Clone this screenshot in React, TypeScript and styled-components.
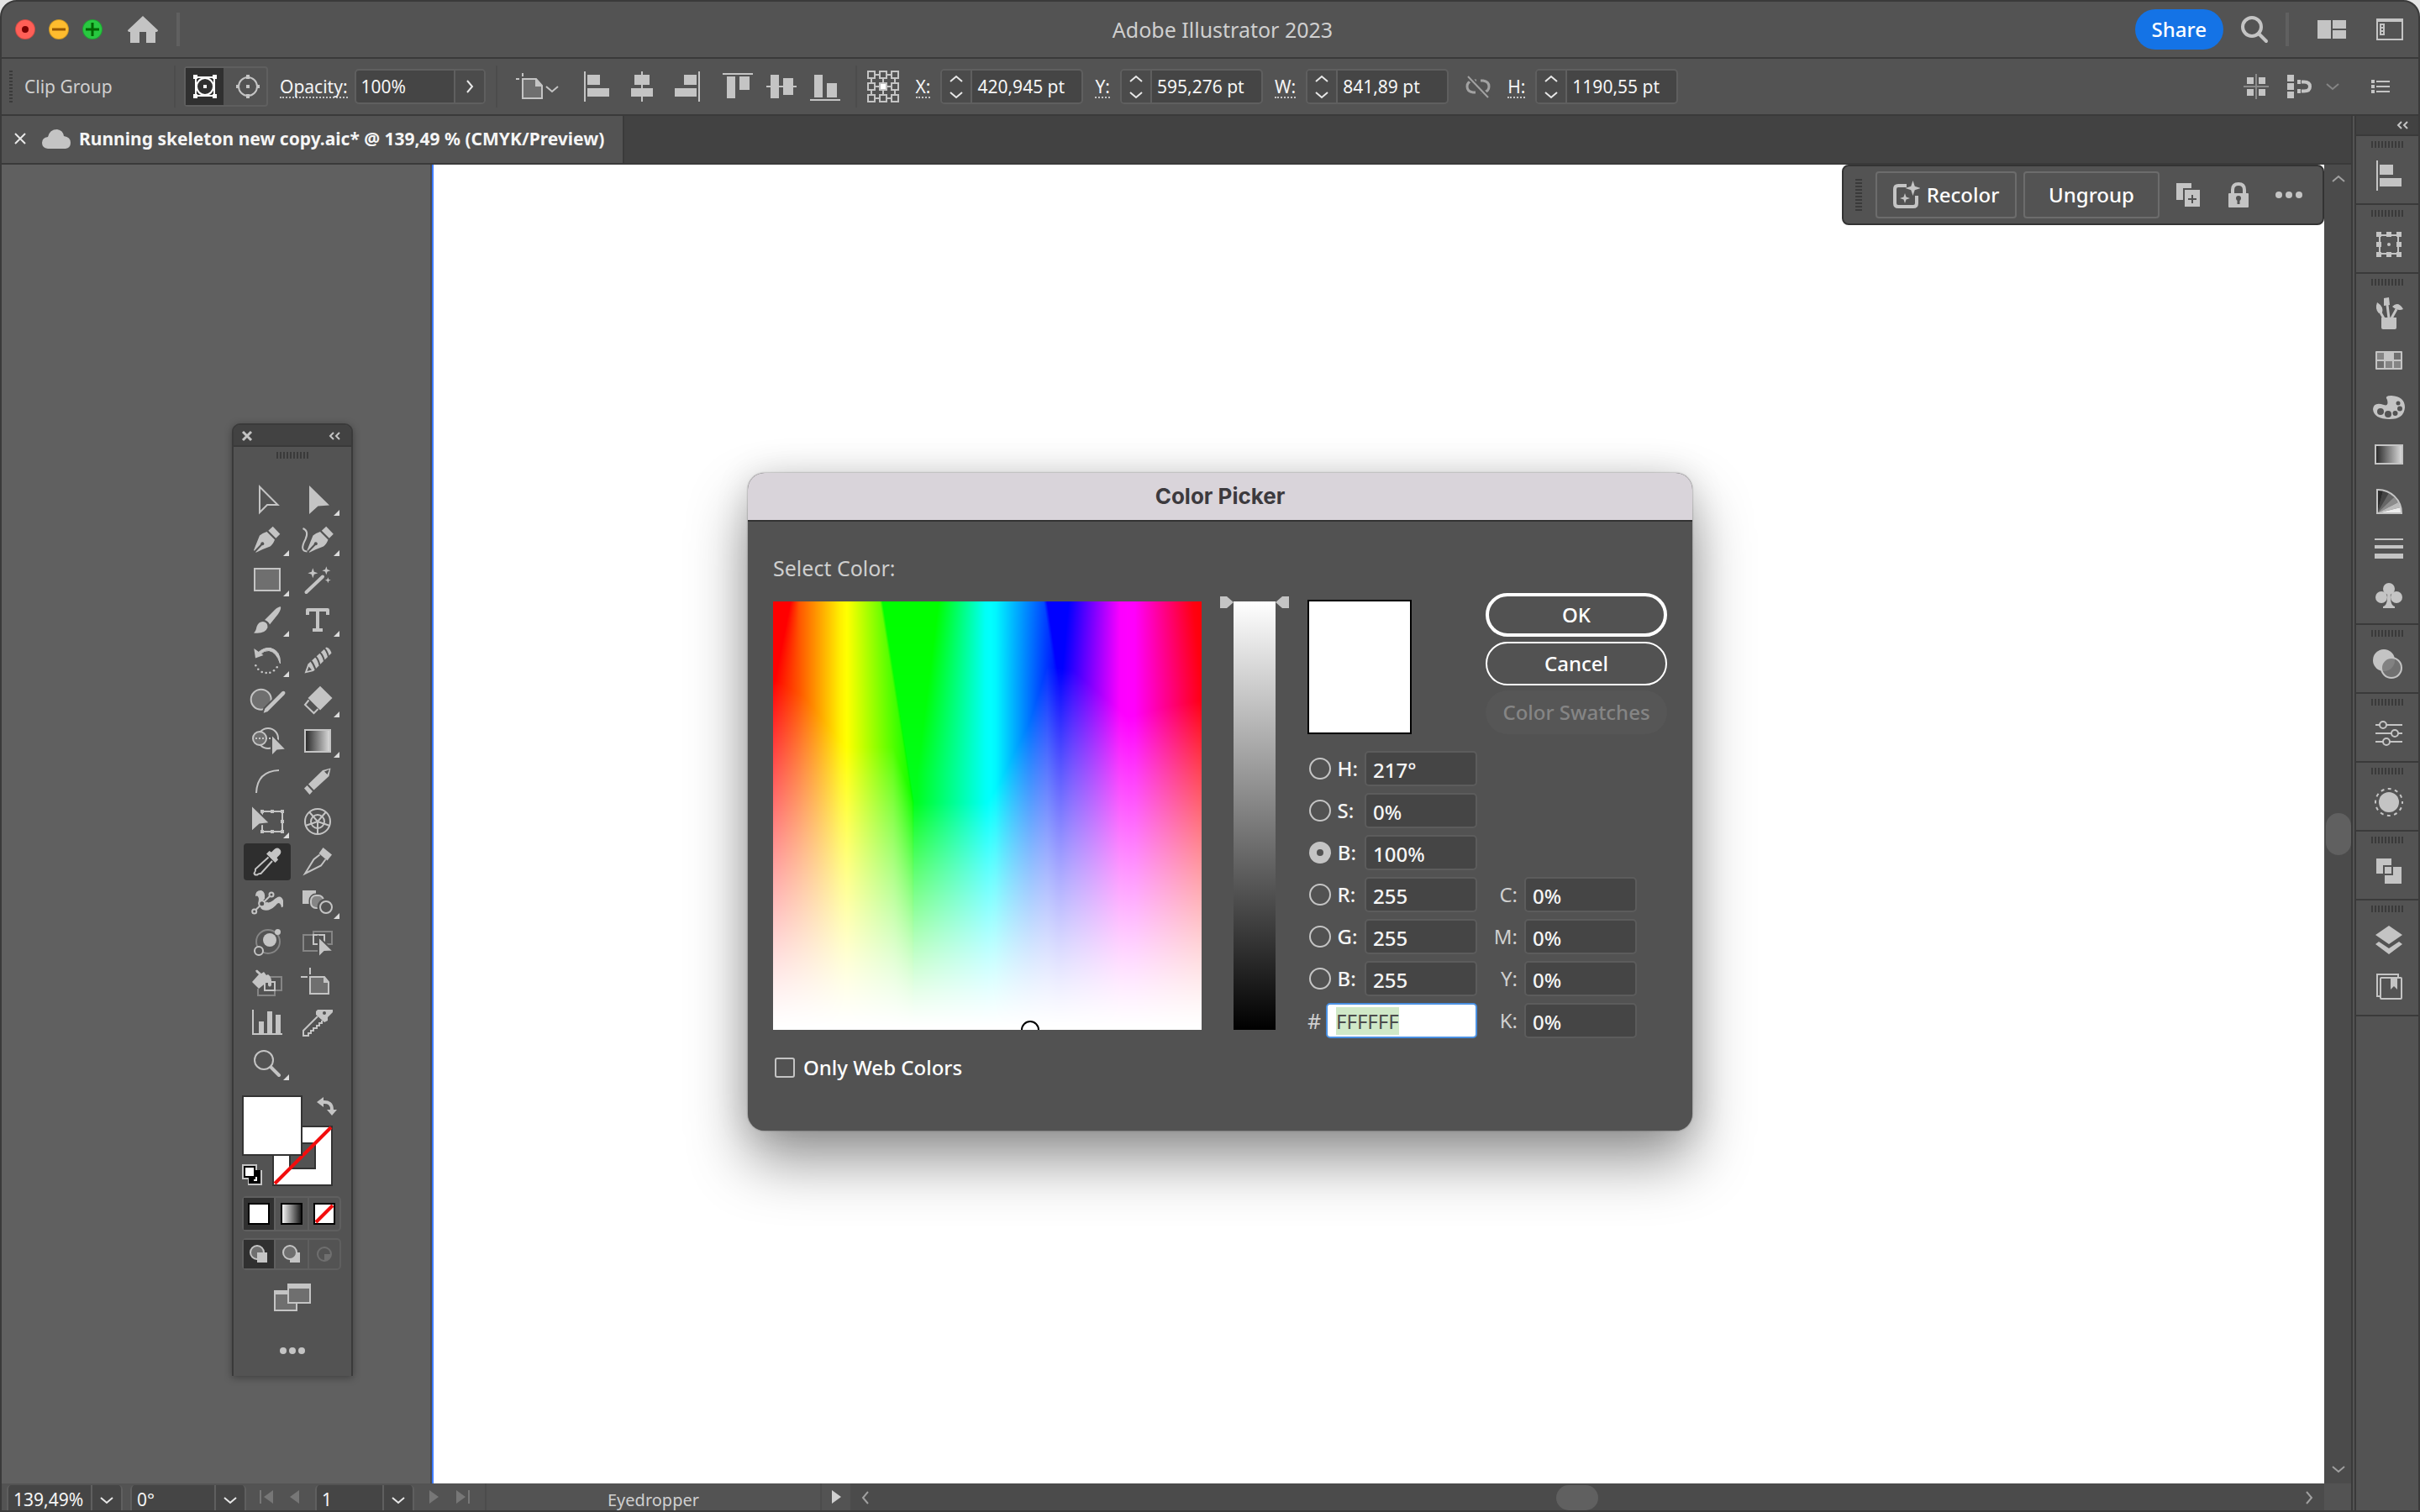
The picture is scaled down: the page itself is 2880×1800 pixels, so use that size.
import React, { useEffect, useRef } from 'react';
import styled, { createGlobalStyle, css } from 'styled-components';

const c = {
  panel: '#535353',
  line: '#3a3a3a',
  strip: '#424242',
  field: '#454545',
  edge: '#5f5f5f',
  pressed: '#303030',
  icon: '#c4c4c4',
  mid: '#6f6f6f',
  text: '#cfcfcf',
  bright: '#f5f5f5',
};

const Global = createGlobalStyle`
  *, *::before, *::after { box-sizing: border-box; }
  html, body { margin: 0; height: 100%; background: #e4e4e4; }
  #root { height: 100%; }
  body, button, input, select {
    font-family: "Noto Sans", "Open Sans", sans-serif;
  }
  button, input, select { margin: 0; padding: 0; color: inherit; }
  svg { display: block; flex: none; }
`;

/* ---------- window frame ---------- */

const Frame = styled.div`
  display: flex;
  flex-direction: column;
  min-height: 100vh;
  border: 2px solid ${c.line};
  border-radius: 20px 20px 0 0;
  overflow: hidden;
  background: ${c.panel};
  color: ${c.text};
  font-size: 21px;
  line-height: 28px;
`;

const Defs = styled.svg`
  position: absolute;
`;

const TitleBar = styled.header`
  display: grid;
  grid-template-columns: 1fr auto 1fr;
  align-items: center;
  height: 68px;
  padding: 0 18px 0 16px;
  border-bottom: 2px solid ${c.line};
`;

const AppTitle = styled.h1`
  margin: 0;
  padding-left: 32px;
  font-size: 25px;
  line-height: 34px;
  font-weight: 400;
`;

const Cluster = styled.div<{ $gap?: number; $ml?: number; $end?: boolean }>`
  display: flex;
  align-items: center;
  gap: ${p => p.$gap ?? 16}px;
  margin-left: ${p => p.$ml ?? 0}px;
  ${p => p.$end && 'justify-content: flex-end;'}
`;

const Light = styled.button<{ $tone: string }>`
  display: grid;
  place-items: center;
  width: 24px;
  height: 24px;
  border: 1px solid rgba(0, 0, 0, 0.2);
  border-radius: 50%;
  background: ${p => p.$tone};
`;

const Plain = styled.button<{ $ml?: number }>`
  display: flex;
  align-items: center;
  justify-content: center;
  border: 0;
  background: none;
  margin-left: ${p => p.$ml ?? 0}px;
`;

const Rule = styled.span<{ $h: number; $w?: number; $ml?: number; $dark?: boolean }>`
  width: ${p => p.$w ?? 4}px;
  height: ${p => p.$h}px;
  margin-left: ${p => p.$ml ?? 0}px;
  background: ${p => (p.$dark ? '#4c4c4c' : '#606060')};
`;

const Share = styled.button`
  height: 48px;
  padding: 0 20px;
  border: 0;
  border-radius: 24px;
  background: #1473e6;
  color: #fff;
  font-size: 24px;
  line-height: 34px;
  font-weight: 500;
`;

/* ---------- control bar ---------- */

const ControlBar = styled.section`
  display: flex;
  align-items: center;
  height: 68px;
  padding: 0 34px 0 9px;
  border-bottom: 2px solid ${c.line};
`;

const Grip = styled.span<{ $vertical?: boolean; $w: number; $h: number }>`
  flex: none;
  width: ${p => p.$w}px;
  height: ${p => p.$h}px;
  background: repeating-linear-gradient(
    ${p => (p.$vertical ? '180deg' : '90deg')},
    ${c.line} 0 2px,
    transparent 2px 4px
  );
`;

const Kind = styled.span`
  width: 178px;
  margin-left: 14px;
`;

const Toggle = styled.div`
  display: flex;
  gap: 6px;
  margin-left: 10px;
  border: 2px solid ${c.edge};
  border-radius: 4px;
`;

const ToggleButton = styled.button<{ $on?: boolean }>`
  display: grid;
  place-items: center;
  width: 45px;
  height: 44px;
  border: 0;
  background: ${p => (p.$on ? c.pressed : 'none')};
`;

const Caption = styled.label<{ $ml: number }>`
  margin-left: ${p => p.$ml}px;
  height: 28px;
  border-bottom: 2px dotted ${c.icon};
  color: ${c.bright};
`;

const Field = styled.div<{ $w: number; $ml: number }>`
  display: flex;
  width: ${p => p.$w}px;
  height: 42px;
  margin-left: ${p => p.$ml}px;
  border: 2px solid ${c.edge};
  border-radius: 5px;
  background: ${c.field};
  overflow: hidden;
  flex: none;
`;

const FieldInput = styled.input`
  flex: 1;
  min-width: 0;
  border: 0;
  padding: 0 6px;
  background: none;
  color: ${c.bright};
  font-size: 21px;
`;

const Stepper = styled.div`
  display: flex;
  flex-direction: column;
  width: 36px;
  border-right: 2px solid ${c.edge};
  background: #4b4b4b;
`;

const Step = styled.button`
  display: grid;
  place-items: center;
  flex: 1;
  border: 0;
  background: none;
`;

const FlyButton = styled.button`
  display: grid;
  place-items: center;
  width: 36px;
  border: 0;
  border-left: 2px solid ${c.edge};
  background: #4b4b4b;
`;

const Spacer = styled.span`
  flex: 1;
`;

/* ---------- work area ---------- */

const Work = styled.div`
  display: flex;
  flex: 1;
  min-height: 0;
`;

const Doc = styled.main`
  display: flex;
  flex-direction: column;
  flex: 1;
  min-width: 0;
  border-right: 2px solid ${c.line};
`;

const TabStrip = styled.nav`
  display: flex;
  height: 58px;
  background: ${c.strip};
  border-bottom: 2px solid ${c.line};
`;

const Tab = styled.div`
  display: flex;
  align-items: center;
  gap: 10px;
  padding: 0 22px 2px 14px;
  border-right: 2px solid ${c.line};
  background: ${c.panel};
  color: ${c.bright};
  font-weight: 700;
  white-space: nowrap;
`;

const Stage = styled.div`
  position: relative;
  display: flex;
  flex: 1;
  min-height: 0;
`;

const Pasteboard = styled.div`
  width: 512px;
  border-right: 2px solid #4a4a4e;
  background: #606060;
`;

const Artboard = styled.div`
  flex: 1;
  border-left: 2px solid #3d7bff;
  background: #fff;
`;

const ScrollV = styled.div`
  display: flex;
  flex-direction: column;
  align-items: center;
  width: 32px;
  padding: 12px 0 12px 2px;
  background: #4b4b4b;
`;

const Thumb = styled.span`
  border-radius: 15px;
  background: #606060;
  flex: none;
`;

const ThumbV = styled(Thumb)`
  width: 30px;
  height: 50px;
`;

const ThumbH = styled(Thumb)`
  width: 50px;
  height: 30px;
`;

const Flex = styled.span<{ $n: number }>`
  flex: ${p => p.$n} 1 0;
`;

const StatusBar = styled.footer`
  display: flex;
  align-items: stretch;
  height: 32px;
`;

const StatusLeft = styled.div`
  display: flex;
  align-items: center;
  width: 1010px;
  padding-left: 6px;
`;

const StatusSelect = styled.label<{ $w: number; $mr?: number }>`
  display: flex;
  align-items: center;
  width: ${p => p.$w}px;
  height: 30px;
  margin: 2px ${p => p.$mr ?? 0}px 0 0;
  border: solid ${c.edge};
  border-width: 0 2px;
  border-radius: 5px 5px 0 0;
  background: ${c.field};
  color: ${c.bright};
  select {
    appearance: none;
    flex: 1;
    min-width: 0;
    height: 30px;
    padding: 4px 0 0 6px;
    border: 0;
    border-right: 2px solid ${c.edge};
    background: none;
    font-size: 21px;
    line-height: 26px;
  }
  svg { margin: 6px 9px 0; }
`;

const StatusText = styled.span`
  flex: 1;
  height: 32px;
  padding-top: 5px;
  border-left: 2px solid #4c4c4c;
  border-right: 2px solid #4c4c4c;
  font-size: 20px;
  line-height: 30px;
  text-align: center;
`;

const ScrollH = styled.div`
  display: flex;
  align-items: center;
  flex: 1;
  padding: 2px 13px 0;
  background: #4b4b4b;
`;

const Corner = styled.span`
  width: 32px;
`;

/* ---------- contextual bar ---------- */

const Context = styled.div`
  position: absolute;
  top: 0;
  right: 32px;
  display: flex;
  align-items: center;
  height: 72px;
  width: 574px;
  padding: 0 20px 0 14px;
  border: 2px solid #333;
  border-radius: 8px;
  background: ${c.panel};
`;

const ContextButton = styled.button<{ $w: number; $ml: number }>`
  display: flex;
  align-items: center;
  justify-content: center;
  gap: 8px;
  width: ${p => p.$w}px;
  height: 56px;
  margin-left: ${p => p.$ml}px;
  border: 2px solid #6c6c6c;
  border-radius: 4px;
  background: none;
  color: #fff;
  font-size: 24px;
  line-height: 34px;
  font-weight: 500;
`;

/* ---------- right dock ---------- */

const Dock = styled.aside`
  display: flex;
  flex-direction: column;
  width: 76px;
  margin-left: 2px;
  border-left: 2px solid ${c.line};
`;

const DockHead = styled.div`
  display: flex;
  align-items: center;
  justify-content: flex-end;
  height: 24px;
  padding: 2px 12px 2px 0;
  background: ${c.strip};
  border-bottom: 2px solid ${c.line};
`;

const DockGroup = styled.div`
  display: flex;
  flex-direction: column;
  align-items: center;
  padding: 6px 0 5px;
  border-bottom: 2px solid ${c.line};
  ${Grip} { margin-bottom: 5px; }
`;

const DockButton = styled.button`
  display: grid;
  place-items: center;
  width: 60px;
  height: 56px;
  border: 0;
  padding-left: 4px;
  background: none;
`;

/* ---------- floating tools ---------- */

const Tools = styled.section`
  position: absolute;
  left: 274px;
  top: 308px;
  width: 144px;
  height: 1134px;
  border: 2px solid ${c.line};
  border-bottom: 0;
  border-radius: 10px 10px 0 0;
  background: ${c.panel};
  box-shadow: 0 2px 10px rgba(0, 0, 0, 0.35);
  display: flex;
  flex-direction: column;
  align-items: center;
`;

const ToolsHead = styled.div`
  display: flex;
  align-items: center;
  justify-content: space-between;
  align-self: stretch;
  height: 26px;
  padding: 2px 13px 0 9px;
  margin-bottom: 6px;
  border-radius: 8px 8px 0 0;
  border-bottom: 2px solid ${c.line};
  background: ${c.strip};
`;

const ToolGrid = styled.div`
  display: grid;
  grid-template-columns: 60px 60px;
  margin-top: 24px;
`;

const ToolButton = styled.button<{ $on?: boolean }>`
  width: 60px;
  height: 48px;
  border: 0;
  background: none;
  ${p =>
    p.$on &&
    css`
      width: 56px;
      height: 44px;
      margin: 2px;
      border-radius: 4px;
      background: #2e2e2e;
      svg { margin: -2px; }
    `}
`;

const SwatchArea = styled.div`
  width: 120px;
  height: 112px;
  margin-top: 12px;
`;

const Modes = styled.div<{ $h: number; $mt: number }>`
  display: grid;
  grid-template-columns: 36px 40px 38px;
  width: 118px;
  height: ${p => p.$h}px;
  margin: ${p => p.$mt}px 2px 0 0;
  border: 2px solid ${c.edge};
  border-radius: 5px;
`;

const Mode = styled.button<{ $on?: boolean }>`
  display: grid;
  place-items: center;
  border: 0;
  background: ${p => (p.$on ? c.pressed : 'none')};
  & + & { border-left: 2px solid ${c.edge}; }
`;

/* ---------- colour picker ---------- */

const Dialog = styled.section`
  position: absolute;
  left: calc(50% - 510px);
  top: 367px;
  width: 1124px;
  border-radius: 20px;
  background: #525252;
  box-shadow: 0 0 2px rgba(0, 0, 0, 0.5), 0 36px 70px rgba(0, 0, 0, 0.42), 0 0 40px rgba(0, 0, 0, 0.12);
  font-size: 25px;
  line-height: 34px;
`;

const DialogTitle = styled.h2`
  margin: 0;
  height: 58px;
  border-bottom: 2px solid #333;
  border-radius: 20px 20px 0 0;
  background: #d9d4da;
  color: #3c3a3e;
  font-family: Inter, "Noto Sans", sans-serif;
  font-size: 26px;
  line-height: 56px;
  font-weight: 700;
  text-align: center;
`;

const DialogBody = styled.div`
  display: grid;
  grid-template-columns: 510px 82px 1fr;
  column-gap: 22px;
  padding: 38px 30px 58px;
`;

const Prompt = styled.p`
  grid-column: 1 / -1;
  margin: 0 0 23px;
`;

const Spectrum = styled.div`
  position: relative;
  width: 510px;
  height: 510px;
  overflow: hidden;
  canvas { display: block; }
`;

const Marker = styled.span`
  position: absolute;
  left: 295px;
  top: 499px;
  width: 22px;
  height: 22px;
  border: 2px solid #000;
  border-radius: 50%;
`;

const Ramp = styled.div`
  position: relative;
  width: 50px;
  height: 510px;
  margin-left: 16px;
  background: linear-gradient(#fff, #000);
`;

const Handle = styled.svg<{ $right?: boolean }>`
  position: absolute;
  top: -6px;
  ${p => (p.$right ? 'left: 50px;' : 'right: 50px;')}
`;

const Values = styled.div`
  display: grid;
  grid-template-columns: 202px 1fr;
  grid-template-rows: 160px auto;
  row-gap: 20px;
  margin: -2px 0 -10px 0;
`;

const Preview = styled.div`
  width: 124px;
  height: 160px;
  border: 2px solid #000;
  background: #fff;
`;

const Actions = styled.div`
  display: flex;
  flex-direction: column;
  gap: 6px;
  width: 216px;
  margin: -8px 0 0 10px;
`;

const Action = styled.button<{ $b: number }>`
  height: 52px;
  flex: none;
  border: ${p => p.$b}px solid #fff;
  border-radius: 26px;
  background: none;
  color: #fff;
  font-size: 24px;
  line-height: 34px;
  font-weight: 500;
  &:disabled {
    border-color: transparent;
    background: #565656;
    color: #858585;
  }
`;

const Rows = styled.div<{ $end?: boolean }>`
  display: flex;
  flex-direction: column;
  gap: 8px;
  ${p => p.$end && 'justify-content: flex-end;'}
`;

const Row = styled.div`
  display: flex;
  align-items: center;
  height: 42px;
`;

const Radio = styled.input`
  appearance: none;
  width: 26px;
  height: 26px;
  margin-left: 2px;
  border: 2px solid ${c.icon};
  border-radius: 50%;
  &:checked { border-width: 9px; }
`;

const RadioLabel = styled.label`
  width: 33px;
  margin-left: 8px;
  color: ${c.bright};
  font-size: 24px;
  font-weight: 500;
`;

const InkLabel = styled.label`
  width: 56px;
  padding-right: 8px;
  font-size: 24px;
  text-align: right;
`;

const Num = styled.input`
  width: 134px;
  height: 42px;
  padding: 2px 8px 0;
  border: 2px solid #5c5c5c;
  border-radius: 5px;
  background: ${c.field};
  color: ${c.bright};
  font-size: 24px;
  font-weight: 500;
`;

const HexLabel = styled.label`
  width: 23px;
`;

const Hex = styled.input`
  width: 180px;
  height: 42px;
  padding: 0 10px;
  border: 2px solid #4a90e2;
  border-radius: 5px;
  background: #fff;
  color: #4c4c4c;
  font-size: 24px;
  outline: 0;
  &::selection { background: #d0e9c8; color: #4c4c4c; }
`;

const WebOnly = styled.label`
  display: flex;
  align-items: center;
  gap: 10px;
  margin: 28px 0 0 2px;
  color: #fff;
  font-size: 24px;
  font-weight: 500;
`;

const Check = styled.input`
  appearance: none;
  width: 24px;
  height: 24px;
  border: 2px solid ${c.icon};
  border-radius: 3px;
`;

/* ---------- drawings ---------- */

const I = ({ w, h, children }: { w: number; h: number; children: React.ReactNode }) => (
  <svg width={w} height={h} viewBox={`0 0 ${w} ${h}`} fill="none" stroke="none" aria-hidden="true">
    {children}
  </svg>
);

const Chevron = ({ d, tone = '#e8e8e8' }: { d: 'up' | 'down' | 'left' | 'right'; tone?: string }) => {
  const flat = d === 'up' || d === 'down';
  const pts = { up: '1,8 8,2 15,8', down: '1,2 8,8 15,2', left: '8,1 2,8 8,15', right: '2,1 8,8 2,15' }[d];
  return (
    <I w={flat ? 16 : 10} h={flat ? 10 : 16}>
      <polyline points={pts} stroke={tone} strokeWidth="2" />
    </I>
  );
};

const DoubleLeft = () => (
  <I w={14} h={10}>
    <path d="M6 1L2 5l4 4M13 1L9 5l4 4" stroke={c.icon} strokeWidth="2" />
  </I>
);

const k = c.icon;
const L = { stroke: k, strokeWidth: 2 };
const star = (x: number, y: number, r: number) => {
  const q = r * 0.25;
  return `M${x} ${y - r}L${x + q} ${y - q}L${x + r} ${y}L${x + q} ${y + q}L${x} ${y + r}L${x - q} ${y + q}L${x - r} ${y}L${x - q} ${y - q}Z`;
};

const nib = (
  <>
    <path d="M36.7 8.7L45.3 17.7L40.3 22.7L31.3 13.7Z" fill={k} />
    <path d="M29.5 15L39 24.5Q37 30 33.5 32.5Q25 35.5 16.7 39.7L14 37Q17.5 28 21 19.5Q24 16.5 29.5 15Z" fill={k} />
    <path d="M15 39L23.5 30" stroke={c.panel} strokeWidth="2" />
    <circle cx="24.3" cy="29.2" r="2" fill={c.panel} />
  </>
);

type Tool = { name: string; more?: boolean; on?: boolean; art: React.ReactNode };

const tools: Tool[] = [
  { name: 'Selection', art: <path d="M21 9.5L42.5 31H30L21 40Z" {...L} /> },
  { name: 'Direct Selection', more: true, art: <path d="M20 8L44 31.5L30.5 32.5L20 42Z" fill={k} /> },
  { name: 'Pen', more: true, art: nib },
  {
    name: 'Curvature',
    more: true,
    art: (
      <>
        <g transform="translate(3.5 0)">{nib}</g>
        <path d="M12.5 11Q20 14 15.5 24Q8 38 17.5 38.5" {...L} />
      </>
    ),
  },
  { name: 'Rectangle', more: true, art: <rect x="15" y="11" width="30" height="26" fill={c.mid} {...L} /> },
  {
    name: 'Magic Wand',
    art: (
      <>
        <path d="M16.5 39L36 20.5" stroke={k} strokeWidth="4" strokeLinecap="round" />
        <path d={star(24.3, 16.3, 6) + star(40.3, 13.3, 5) + star(42.3, 24.7, 3.5)} fill={k} />
      </>
    ),
  },
  {
    name: 'Paintbrush',
    more: true,
    art: (
      <>
        <path d="M46 8.3Q47 11 43 17L33 29.5Q31.5 25.5 27 24L39 12Q43.5 8 46 8.3Z" fill={k} />
        <path d="M25 26Q31 27 30.5 33Q27.5 41 14 39.5Q16.5 37.5 17.5 32Q19.5 26 25 26Z" fill={k} />
      </>
    ),
  },
  {
    name: 'Type',
    more: true,
    art: (
      <g stroke={k} strokeWidth="4">
        <polyline points="18,18 18,12 42,12 42,18" strokeLinejoin="round" />
        <line x1="30" y1="12" x2="30" y2="36" />
        <line x1="24" y1="36" x2="36" y2="36" />
      </g>
    ),
  },
  {
    name: 'Rotate',
    more: true,
    art: (
      <>
        <path d="M14.3 10L16 21.5L25.5 18Z" fill={k} />
        <path d="M19 15Q26 8.5 34 9.5Q46 12.5 45.5 28Q41 14 32 12.5Q26 12 21.5 17.5Z" fill={k} stroke={k} />
        <g fill={k}>
          {[[16.3, 30.3], [19.3, 34.7], [23.7, 38], [28.7, 39], [33.3, 38.7], [38, 36.3], [41.7, 32.3]].map(([x, y]) => (
            <circle key={x} cx={x} cy={y} r="1.3" />
          ))}
        </g>
      </>
    ),
  },
  {
    name: 'Rainbow Pencil',
    art: (
      <>
        <path d="M40.5 8.5Q45 10 46.5 15.5L25 37L14.5 39.5L18.5 28.5Z" fill={k} />
        <path d="M19.5 31.5L17.5 37L23 35.5Z" fill={c.panel} />
        <path d="M22 24.5Q25 28 27.5 35M27.5 19.5Q31 23 32.5 30M32.5 14.5Q36.5 18 38 25M37.5 9.5Q41.5 13 43 20" stroke={c.panel} strokeWidth="2" />
      </>
    ),
  },
  {
    name: 'Blob Brush',
    art: (
      <>
        <circle cx="22.7" cy="22.7" r="12" fill={c.mid} {...L} />
        <path d="M24 40.5L26.5 33L46.5 13Q49.5 10.5 52 13Q53.5 15.5 51 18L31 38Z" fill={k} stroke={c.panel} strokeWidth="2" />
      </>
    ),
  },
  {
    name: 'Eraser',
    more: true,
    art: (
      <>
        <path d="M33 6.7L47.5 21L33 35.5L18.5 21Z" fill={k} />
        <path d="M19.5 23.5L15 29L25.5 39L30.5 34" {...L} />
      </>
    ),
  },
  {
    name: 'Shape Builder',
    art: (
      <>
        <circle cx="31" cy="21" r="12" {...L} />
        <circle cx="21" cy="21" r="8" fill={c.mid} {...L} />
        <path d="M16 21H35" stroke={k} strokeWidth="2" strokeDasharray="2 2" />
        <path d="M35 16L53 34.5L42 35.5L35 42.5Z" fill={k} stroke={c.panel} strokeWidth="2" />
      </>
    ),
  },
  { name: 'Gradient', more: true, art: <rect x="15" y="11" width="30" height="26" fill="url(#gray)" {...L} /> },
  { name: 'Arc', art: <path d="M17 38Q18 12 44 11" {...L} /> },
  {
    name: 'Pencil',
    art: (
      <>
        <path d="M19 27.5L25.5 34.5L43.5 18L45.5 8.5L36 11Z" fill={k} />
        <path d="M38 12.5L44 10L41.5 16Z" fill={c.panel} />
        <path d="M17.5 29L24 36L20.5 40L14 32.5Z" fill={k} />
      </>
    ),
  },
  {
    name: 'Free Transform',
    more: true,
    art: (
      <>
        <rect x="24" y="12" width="24" height="24" {...L} />
        <path d="M22 10h4v4h-4zM34 10h4v4h-4zM46 10h4v4h-4zM46 22h4v4h-4zM46 34h4v4h-4zM34 34h4v4h-4zM22 34h4v4h-4z" fill={k} />
        <path d="M11 4L33.5 26L21 27.5L11 36.5Z" fill={k} stroke={c.panel} strokeWidth="2" />
      </>
    ),
  },
  {
    name: 'Polar Grid',
    art: (
      <g {...L}>
        <circle cx="30" cy="24" r="15" />
        <circle cx="30" cy="24" r="8" />
        <path d="M30 24V39M30 24L15.5 29M30 24L44.5 29M30 24L20 12.5M30 24L40 12.5" />
      </g>
    ),
  },
  {
    name: 'Eyedropper',
    on: true,
    art: (
      <>
        <path d="M38 9.5Q41.5 6 45 9Q48 12.5 44.5 16L41.5 19L43 21.5L39.5 25L29 14.5L32.5 11L35 12.5Z" fill={k} />
        <path d="M31.5 18.5L16 32.5Q16.5 35 14.5 37.5Q15 40 18 39.5Q20 37.5 22.5 38L36 23" {...L} />
      </>
    ),
  },
  {
    name: 'Slice',
    art: (
      <>
        <path d="M36.5 7L47 15.5L41.5 22.5L31.5 14Z" fill={k} />
        <path d="M32.5 15.5L25.5 21L15 38L34 28.5L39.5 21" {...L} />
      </>
    ),
  },
  {
    name: 'Warp',
    art: (
      <>
        <path d="M16 17Q16 9.5 23 10Q28 12 27 19Q29 28 37 22Q46 13 49 22V29Q46.5 32 46.5 28Q44 22 40 28Q32 36 24.5 33Q18 29 20 20Q19 15 16 17Z" fill={k} />
        <path d="M16.5 33L33 17" stroke={c.panel} strokeWidth="4" />
        <path d="M16.5 33L33 17" {...L} />
        <g fill={c.panel} {...L}>
          <circle cx="14.7" cy="35" r="2.5" />
          <circle cx="35" cy="15" r="2.5" />
          <circle cx="23.7" cy="25.7" r="3.5" />
        </g>
      </>
    ),
  },
  {
    name: 'Blend',
    more: true,
    art: (
      <>
        <rect x="12" y="10" width="16" height="16" fill={k} />
        <rect x="22" y="16" width="15" height="15" rx="6" fill="#858585" stroke={c.panel} strokeWidth="5" />
        <rect x="22" y="16" width="15" height="15" rx="6" fill="#858585" {...L} />
        <circle cx="40" cy="30" r="8" fill={c.panel} stroke={c.panel} strokeWidth="5" />
        <circle cx="40" cy="30" r="7" {...L} />
      </>
    ),
  },
  {
    name: 'Symbol Sprayer',
    art: (
      <>
        <circle cx="31" cy="23" r="14" stroke="#858585" strokeWidth="2" />
        <circle cx="33" cy="21" r="8" fill={k} />
        <circle cx="42.5" cy="11.5" r="3.5" fill={k} />
        <circle cx="20" cy="34" r="5" fill={c.panel} {...L} />
      </>
    ),
  },
  {
    name: 'Shape Select',
    art: (
      <>
        <rect x="13" y="15" width="25" height="19" stroke="#858585" strokeWidth="2" />
        <rect x="25" y="11" width="22" height="15" stroke="#858585" strokeWidth="2" />
        <rect x="25" y="15" width="13" height="11" {...L} />
        <path d="M31 17L49 34.5L38 35L31 42Z" fill={k} stroke={c.panel} strokeWidth="2" />
      </>
    ),
  },
  {
    name: 'Live Paint',
    art: (
      <>
        <path d="M19 31V39H39V34M33 17H47V33H40" stroke="#858585" strokeWidth="2" />
        <path d="M27 23H39V33H27Z" {...L} />
        <path d="M12 23L20 14L17 11.5L16 9.5L18 8.5L23 13L26 11L29 15L31 14Q36 17 35 27Q33 30 31 27V22L20 31Z" fill={k} />
      </>
    ),
  },
  {
    name: 'Artboard',
    art: (
      <>
        <path d="M21 17H38L43 23V37H21Z" fill={c.mid} {...L} />
        <path d="M37 17V24H43Z" fill={k} />
        <path d="M21 6V14M10 17H18" {...L} />
      </>
    ),
  },
  {
    name: 'Column Graph',
    art: (
      <>
        <path d="M13 8V37H48" {...L} />
        <path d="M20 22h6v15h-6zM30 10h6v27h-6zM40 14h6v23h-6z" fill={k} />
      </>
    ),
  },
  {
    name: 'Saw',
    art: (
      <>
        <path d="M30 8H48V11L42 17V21L38 23L28 14V10Z" fill={k} />
        <circle cx="38" cy="12" r="2" fill={c.panel} />
        <path d="M30 16L13 33V39H19V36H22V33H25V30H29V27H32V24H35V21" {...L} />
      </>
    ),
  },
  {
    name: 'Zoom',
    more: true,
    art: (
      <>
        <circle cx="26" cy="20" r="11" {...L} />
        <path d="M34.5 28.5L44 38" stroke={k} strokeWidth="4" strokeLinecap="round" />
      </>
    ),
  },
];

const dock: { name: string; art: React.ReactNode }[][] = [
  [{ name: 'Align', art: <path d="M4 2h2v36H4zM8 7h16v12H8zM8 23h26v10H8z" fill={k} /> }],
  [
    {
      name: 'Transform',
      art: (
        <>
          <rect x="8" y="9" width="22" height="22" {...L} />
          <path d="M4 5h6v6H4zM16 5h6v6h-6zM28 5h6v6h-6zM4 17h6v6H4zM28 17h6v6h-6zM4 29h6v6H4zM16 29h6v6h-6zM28 29h6v6h-6z" fill={k} />
          <circle cx="19" cy="20" r="2" fill={k} />
        </>
      ),
    },
  ],
  [
    {
      name: 'Brushes',
      art: (
        <>
          <path d="M10 25h18v12q0 2-2 2H12q-2 0-2-2z" fill={k} />
          <path d="M13 26L9 19M19 26L17 10M22 26L28 15" stroke={k} strokeWidth="3" />
          <path d="M5 7Q13 12 11 19L7 20Q2 15 5 7ZM13 2l6-1 1 9-7 1zM23 12Q30 5 36 15Q30 18 23 12Z" fill={k} />
        </>
      ),
    },
    {
      name: 'Swatches',
      art: (
        <>
          <rect x="3" y="9" width="32" height="22" rx="1" fill={k} />
          <path d="M5 11h8v8H5zM15 21h8v8h-8zM25 21h8v8h-8z" fill="#858585" />
          <path d="M25 11h8v8h-8zM5 21h8v8H5z" fill={c.mid} />
        </>
      ),
    },
    {
      name: 'Color',
      art: (
        <>
          <path d="M17 11Q13 6 22 6Q38 7 38 20Q37 34 20 34Q1 34 0 22Q1 13 13 17Q19 19 17 11Z" fill={k} />
          <g fill={c.panel}>
            <circle cx="9" cy="25" r="4" />
            <circle cx="18" cy="28" r="4" />
            <circle cx="26.5" cy="27" r="3" />
            <circle cx="32" cy="21.5" r="3" />
            <circle cx="30" cy="15" r="2.5" />
          </g>
        </>
      ),
    },
    { name: 'Gradient', art: <rect x="3" y="9" width="32" height="22" fill="url(#gray)" {...L} /> },
    {
      name: 'Color Guide',
      art: (
        <>
          <path d="M5 34V6A29 29 0 0 1 12 7.5Z" fill="#2b2b2b" />
          <path d="M5 34L12 7.5L19 10Z" fill="#444" />
          <path d="M5 34L19 10L25 15Z" fill="#666" />
          <path d="M5 34L25 15L30 21Z" fill="#8c8c8c" />
          <path d="M5 34L30 21L33 27Z" fill="#bbb" />
          <path d="M5 34L33 27L34 34Z" fill="#eee" />
          <path d="M5 34V6A28 28 0 0 1 34 34Z" {...L} />
        </>
      ),
    },
    { name: 'Stroke', art: <path d="M2 8h34v2H2zM2 16h34v4H2zM2 26h34v6H2z" fill={k} /> },
    {
      name: 'Symbols',
      art: (
        <g fill={k}>
          <circle cx="19" cy="12" r="7" />
          <circle cx="10" cy="22" r="7" />
          <circle cx="28" cy="22" r="7" />
          <path d="M17 16h4q-1 16 5 17v2H12v-2q6-1 5-17z" />
        </g>
      ),
    },
  ],
  [
    {
      name: 'Transparency',
      art: (
        <>
          <circle cx="13" cy="15" r="13" fill={k} />
          <circle cx="22" cy="24" r="12" fill="#777" fillOpacity="0.85" {...L} />
        </>
      ),
    },
  ],
  [
    {
      name: 'Properties',
      art: (
        <g fill={c.panel} {...L}>
          <path d="M3 10H35M3 20H35M3 30H35" />
          <circle cx="12" cy="10" r="4" />
          <circle cx="26" cy="20" r="4" />
          <circle cx="16" cy="30" r="4" />
        </g>
      ),
    },
  ],
  [
    {
      name: 'Appearance',
      art: (
        <>
          <circle cx="19" cy="20" r="12" fill={k} />
          <circle cx="19" cy="20" r="16" strokeDasharray="4 4.4" strokeDashoffset="2" {...L} />
        </>
      ),
    },
  ],
  [
    {
      name: 'Pathfinder',
      art: (
        <>
          <path d="M4 5h18v8h-10v10H4zM24 15h10v20H14v-10h10z" fill={k} />
          <rect x="14" y="15" width="8" height="8" fill={k} />
        </>
      ),
    },
  ],
  [
    {
      name: 'Layers',
      art: <path d="M19 3L35 14L19 25L3 14ZM3 25L7 22L19 30L31 22L35 25L19 37Z" fill={k} />,
    },
    {
      name: 'Libraries',
      art: (
        <>
          <path d="M9 31H5V5H30V8" {...L} />
          <rect x="9" y="9" width="25" height="25" rx="1" {...L} />
          <path d="M21 9h8v14l-4-4-4 4z" fill={k} />
        </>
      ),
    },
  ],
];

const aligns: [string, React.ReactNode][] = [
  ['Horizontal Align Left', <path d="M1 0h2v36H1zM5 4h15v12H5zM5 20h26v10H5z" fill={k} />],
  ['Horizontal Align Center', <path d="M15 0h2v36h-2zM7 4h18v12H7zM3 20h26v10H3z" fill={k} />],
  ['Horizontal Align Right', <path d="M29 0h2v36h-2zM12 4h15v12H12zM1 20h26v10H1z" fill={k} />],
  ['Vertical Align Top', <path d="M0 2h36v2H0zM5 6h10v26H5zM20 6h12v16H20z" fill={k} />],
  ['Vertical Align Center', <path d="M0 17h36v2H0zM5 4h10v28H5zM20 8h12v20H20z" fill={k} />],
  ['Vertical Align Bottom', <path d="M0 33h36v2H0zM5 4h10v27H5zM20 14h12v17H20z" fill={k} />],
];

/* Fills the hue/saturation field: pure hue on top, then a fade to white below the gamut edge. */
const fadeStart: [number, number][] = [
  [0, 0.18], [0.07, 0.22], [0.17, 0.34], [0.28, 0.34], [0.33, 0.47], [0.5, 0.47], [0.53, 0.42],
  [0.6, 0.28], [0.64, 0.15], [0.7, 0.16], [0.77, 0.22], [0.83, 0.27], [0.9, 0.25], [1, 0.23],
];

const lerp = (pts: [number, number][], x: number) => {
  for (let i = 1; i < pts.length; i++) {
    const [x0, y0] = pts[i - 1];
    const [x1, y1] = pts[i];
    if (x <= x1) return x1 === x0 ? y1 : y0 + ((y1 - y0) * (x - x0)) / (x1 - x0);
  }
  return pts[pts.length - 1][1];
};

const paintSpectrum = (ctx: CanvasRenderingContext2D, n: number) => {
  const img = ctx.createImageData(n, n);
  for (let py = 0; py < n; py++) {
    const y = py / (n - 1);
    const g = Math.min(1, y / 0.47);
    const b = Math.min(1, y / 0.2);
    const greenL = 0.255 + 0.075 * g;
    const blueL = 0.64 + 0.03 * b;
    const hues: [number, number][] = [
      [0, 0], [0.04 * (1 - b) + 0.0001, 0], [0.06, 20], [0.155, 56], [0.175, 61], [greenL - 0.006, 94 + 22 * g], [greenL, 120 + 8 * g * g],
      [0.385 - 0.05 * Math.min(1, y / 0.4) + 0.001, 120 + 8 * g * g], [0.495, 178], [0.52, 182], [blueL - 0.008, 222 + 16 * b],
      [blueL, 240], [0.69 - 0.018 * b, 240], [0.81, 299], [0.845, 301], [0.98 + 0.02 * b, 356], [1.01, 360],
    ];
    for (let px = 0; px < n; px++) {
      const x = px / (n - 1);
      const h = lerp(hues, x) / 60;
      const s0 = lerp(fadeStart, x);
      const s = y < s0 ? 1 : Math.pow(1 - (y - s0) / (1 - s0), 1.3);
      const ch = (o: number) => {
        const t = (o + h) % 6;
        return 255 * (1 - s * Math.max(0, Math.min(1, t, 4 - t)));
      };
      const at = (py * n + px) * 4;
      img.data[at] = ch(5);
      img.data[at + 1] = ch(3);
      img.data[at + 2] = ch(1);
      img.data[at + 3] = 255;
    }
  }
  ctx.putImageData(img, 0, 0);
};

/* ---------- parts ---------- */

const NumberField = ({ id, label, value, ml }: { id: string; label: string; value: string; ml: number }) => (
  <>
    <Caption htmlFor={id} $ml={ml}>{label}</Caption>
    <Field $w={170} $ml={12}>
      <Stepper>
        <Step aria-label={`Increase ${label}`}><Chevron d="up" /></Step>
        <Step aria-label={`Decrease ${label}`}><Chevron d="down" /></Step>
      </Stepper>
      <FieldInput id={id} defaultValue={value} />
    </Field>
  </>
);

const ToolsPanel = () => (
  <Tools aria-label="Tools">
    <ToolsHead>
      <Plain aria-label="Close tools"><I w={14} h={14}><path d="M2 2l10 10M12 2L2 12" stroke={k} strokeWidth="3" /></I></Plain>
      <Plain aria-label="Collapse tools"><DoubleLeft /></Plain>
    </ToolsHead>
    <Grip $w={38} $h={8} />
    <ToolGrid>
      {tools.map(t => (
        <ToolButton key={t.name} $on={t.on} aria-label={t.name}>
          <I w={60} h={48}>
            {t.art}
            {t.more && <path d="M56 37V44H49Z" fill="#dcdcdc" />}
          </I>
        </ToolButton>
      ))}
    </ToolGrid>
    <SwatchArea>
      <I w={120} h={112}>
        <path d="M37 39H107V109H37ZM57 59V89H87V59Z" fill="#fff" fillRule="evenodd" stroke="#333" strokeWidth="2" />
        <path d="M39 107L106 40" stroke="#f20d0d" strokeWidth="4" />
        <rect x="1" y="3" width="70" height="70" fill="#fff" stroke="#333" strokeWidth="2" />
        <path d="M96 10Q107 9 107 19" stroke={k} strokeWidth="4" />
        <path d="M89 10L97 4V16ZM101 19H113L107 26Z" fill={k} />
        <path d="M0 84h18v7h6v18H7v-7H0z" fill={k} />
        <path d="M14 91h8v16H8v-7h6z" fill="#000" />
        <rect x="3" y="87" width="12" height="12" fill="#fff" stroke="#000" strokeWidth="2" />
        <path d="M14 103h3v-4" stroke="#fff" strokeWidth="2" />
      </I>
    </SwatchArea>
    <Modes $h={42} $mt={10}>
      <Mode $on aria-label="Color"><I w={26} h={26}><rect x="1" y="1" width="24" height="24" fill="#fff" stroke="#000" strokeWidth="2" /></I></Mode>
      <Mode aria-label="Gradient"><I w={26} h={26}><rect x="1" y="1" width="24" height="24" fill="url(#fade)" stroke="#000" strokeWidth="2" /></I></Mode>
      <Mode aria-label="None">
        <I w={26} h={26}>
          <rect x="1" y="1" width="24" height="24" fill="#fff" stroke="#000" strokeWidth="2" />
          <path d="M3 23L23 3" stroke="#f20d0d" strokeWidth="4" />
        </I>
      </Mode>
    </Modes>
    <Modes $h={38} $mt={8}>
      <Mode $on aria-label="Draw Normal">
        <I w={22} h={22}><circle cx="9" cy="9" r="8" fill={c.mid} {...L} /><rect x="9" y="9" width="12" height="12" fill={k} /></I>
      </Mode>
      <Mode aria-label="Draw Behind">
        <I w={22} h={22}><rect x="9" y="9" width="12" height="12" fill={k} /><circle cx="9" cy="9" r="8" fill={c.mid} {...L} /></I>
      </Mode>
      <Mode aria-label="Draw Inside" disabled>
        <I w={18} h={18}><circle cx="9" cy="9" r="8" stroke={c.mid} strokeWidth="2" /><path d="M9 9h8a8 8 0 0 1-8 8z" fill={c.mid} /></I>
      </Mode>
    </Modes>
    <Plain aria-label="Screen Mode">
      <I w={44} h={66}>
        <path d="M1 26H27V48H1Z" fill={c.mid} {...L} />
        <path d="M0 24h28v5H0z" fill={k} />
        <rect x="17" y="17" width="26" height="22" fill={c.mid} {...L} />
        <path d="M16 16h28v6H16z" fill={k} />
      </I>
    </Plain>
    <Plain aria-label="Edit Toolbar">
      <I w={30} h={60}><circle cx="4" cy="30" r="4" fill={k} /><circle cx="15" cy="30" r="4" fill={k} /><circle cx="26" cy="30" r="4" fill={k} /></I>
    </Plain>
  </Tools>
);

const channels: [string, string, string][] = [
  ['hue', 'H:', '217°'],
  ['sat', 'S:', '0%'],
  ['bri', 'B:', '100%'],
  ['red', 'R:', '255'],
  ['green', 'G:', '255'],
  ['blue', 'B:', '255'],
];

const ColorPicker = () => {
  const canvas = useRef<HTMLCanvasElement>(null);
  const hex = useRef<HTMLInputElement>(null);
  useEffect(() => {
    const ctx = canvas.current?.getContext('2d');
    if (ctx) paintSpectrum(ctx, 510);
    hex.current?.focus();
    hex.current?.select();
  }, []);
  return (
    <Dialog role="dialog" aria-labelledby="picker-title">
      <DialogTitle id="picker-title">Color Picker</DialogTitle>
      <DialogBody>
        <Prompt>Select Color:</Prompt>
        <Spectrum>
          <canvas ref={canvas} width={510} height={510} />
          <Marker />
        </Spectrum>
        <Ramp>
          <Handle width="16" height="14" viewBox="0 0 16 14"><path d="M0 0H8L16 7L8 14H0Z" fill={k} /></Handle>
          <Handle $right width="16" height="14" viewBox="0 0 16 14"><path d="M16 0H8L0 7L8 14H16Z" fill={k} /></Handle>
        </Ramp>
        <Values>
          <Preview />
          <Actions>
            <Action $b={4}>OK</Action>
            <Action $b={2}>Cancel</Action>
            <Action $b={2} disabled>Color Swatches</Action>
          </Actions>
          <Rows>
            {channels.map(([id, label, value]) => (
              <Row key={id}>
                <Radio type="radio" name="channel" id={`r-${id}`} defaultChecked={id === 'bri'} />
                <RadioLabel htmlFor={`r-${id}`}>{label}</RadioLabel>
                <Num defaultValue={value} aria-label={id} />
              </Row>
            ))}
            <Row>
              <HexLabel htmlFor="hex">#</HexLabel>
              <Hex id="hex" ref={hex} defaultValue="FFFFFF" />
            </Row>
          </Rows>
          <Rows $end>
            {['C:', 'M:', 'Y:', 'K:'].map(ink => (
              <Row key={ink}>
                <InkLabel htmlFor={`ink-${ink}`}>{ink}</InkLabel>
                <Num id={`ink-${ink}`} defaultValue="0%" />
              </Row>
            ))}
          </Rows>
        </Values>
        <WebOnly>
          <Check type="checkbox" />
          Only Web Colors
        </WebOnly>
      </DialogBody>
    </Dialog>
  );
};

export default function App() {
  return (
    <Frame>
      <Global />
      <Defs width="0" height="0" aria-hidden="true">
        <defs>
          <linearGradient id="gray"><stop offset="0" stopColor="#262626" /><stop offset="1" stopColor="#dedede" /></linearGradient>
          <linearGradient id="fade"><stop offset="0" stopColor="#fff" /><stop offset="1" stopColor="#111" /></linearGradient>
        </defs>
      </Defs>
      <TitleBar>
        <Cluster>
          <Light $tone="#ff5f57" aria-label="Close"><I w={8} h={8}><circle cx="4" cy="4" r="4" fill="#7a0000" /></I></Light>
          <Light $tone="#febc2e" aria-label="Minimize"><I w={16} h={4}><path d="M0 2H16" stroke="#985700" strokeWidth="3" /></I></Light>
          <Light $tone="#28c840" aria-label="Zoom"><I w={16} h={16}><path d="M0 8H16M8 0V16" stroke="#006500" strokeWidth="3" /></I></Light>
          <Plain $ml={14} aria-label="Home">
            <I w={36} h={34}><path d="M18 1L36 18Q36 20 33 20V33H22V20H14V33H3V20Q0 20 0 18Z" fill={k} /></I>
          </Plain>
          <Rule $h={40} $ml={6} />
        </Cluster>
        <AppTitle>Adobe Illustrator 2023</AppTitle>
        <Cluster $gap={20} $end>
          <Share>Share</Share>
          <Plain aria-label="Search">
            <I w={34} h={34}><circle cx="14" cy="14" r="11" stroke={k} strokeWidth="4" /><path d="M22 22L31 31" stroke={k} strokeWidth="4" strokeLinecap="round" /></I>
          </Plain>
          <Rule $h={40} />
          <Plain $ml={14} aria-label="Arrange Documents">
            <I w={34} h={22}><path d="M0 0h16v22H0zM18 0h16v10H18zM18 12h16v10H18z" fill={k} /></I>
          </Plain>
          <Plain $ml={16} aria-label="Switch Workspace">
            <I w={32} h={26}><rect x="1" y="1" width="30" height="24" {...L} /><path d="M0 0h32v4H0zM4 6h6v14H4z" fill={k} /><path d="M7 8v10" stroke={c.panel} strokeWidth="2" strokeDasharray="2 2" /></I>
          </Plain>
        </Cluster>
      </TitleBar>

      <ControlBar>
        <Grip $vertical $w={4} $h={38} />
        <Kind>Clip Group</Kind>
        <Rule $h={50} $w={2} $dark />
        <Toggle>
          <ToggleButton $on aria-label="Edit Clipping Path">
            <I w={28} h={28}>
              <rect x="3" y="3" width="22" height="22" stroke="#fff" strokeWidth="2" />
              <circle cx="14" cy="14" r="10" stroke="#fff" strokeWidth="2" />
              <path d="M0 0h5v5H0zM23 0h5v5h-5zM0 23h5v5H0zM23 23h5v5h-5zM12 12h4v4h-4z" fill="#fff" />
            </I>
          </ToggleButton>
          <ToggleButton aria-label="Edit Contents">
            <I w={28} h={28}><circle cx="14" cy="14" r="11" {...L} /><path d="M12 0h4v5h-4zM12 23h4v5h-4zM0 12h4v4H0zM24 12h4v4h-4zM12 12h4v4h-4z" fill={k} /></I>
          </ToggleButton>
        </Toggle>
        <Caption htmlFor="opacity" $ml={14}>Opacity:</Caption>
        <Field $w={156} $ml={8}>
          <FieldInput id="opacity" defaultValue="100%" />
          <FlyButton aria-label="Opacity slider"><Chevron d="right" /></FlyButton>
        </Field>
        <Rule $h={50} $w={2} $ml={12} $dark />
        <Plain $ml={22} aria-label="Document Setup">
          <I w={52} h={36}>
            <path d="M8 9H24L31 17V32H8Z" fill={c.mid} {...L} /><path d="M23 8V18H31Z" fill={k} />
            <path d="M8 2v4M0 9h4" {...L} />
            <polyline points="36,18 43,24 50,18" {...L} />
          </I>
        </Plain>
        <Cluster $gap={20} $ml={28}>
          {aligns.slice(0, 3).map(([n, art]) => (
            <Plain key={n} aria-label={n}><I w={34} h={36}>{art}</I></Plain>
          ))}
        </Cluster>
        <Cluster $ml={24}>
          {aligns.slice(3).map(([n, art]) => (
            <Plain key={n} aria-label={n}><I w={36} h={36}>{art}</I></Plain>
          ))}
        </Cluster>
        <Rule $h={50} $w={2} $ml={18} $dark />
        <Plain $ml={12} aria-label="Reference Point">
          <I w={38} h={38}>
            <path d="M5 5H33V33H5ZM19 5V33M5 19H33" stroke={k} strokeWidth="2" />
            <g fill={c.panel} {...L}>
              {[1, 15, 29].map(x => [1, 15, 29].map(y => <rect key={`${x}-${y}`} x={x} y={y} width="8" height="8" fill={x === 15 && y === 15 ? '#fff' : c.panel} />))}
            </g>
          </I>
        </Plain>
        <NumberField id="x" label="X:" value="420,945 pt" ml={20} />
        <NumberField id="y" label="Y:" value="595,276 pt" ml={14} />
        <NumberField id="w" label="W:" value="841,89 pt" ml={14} />
        <Plain $ml={20} aria-label="Constrain Proportions">
          <I w={30} h={28}>
            <path d="M13 7H9Q2 8 2 14T9 21H12M18 7H21Q28 8 28 14T21 21H18" stroke="#a2a2a2" strokeWidth="3" />
            <path d="M3 2L27 27" stroke={c.panel} strokeWidth="6" /><path d="M3 2L27 27" stroke="#a2a2a2" strokeWidth="2" />
          </I>
        </Plain>
        <NumberField id="h" label="H:" value="1190,55 pt" ml={20} />
        <Spacer />
        <Plain aria-label="Align to Pixel Grid">
          <I w={30} h={30}><path d="M15 0V30M0 15H30" stroke="#8a8a8a" strokeWidth="2" /><path d="M4 4h8v8H4zM18 4h8v8h-8zM4 18h8v8H4zM18 18h8v8h-8z" fill={k} /></I>
        </Plain>
        <Plain $ml={22} aria-label="Snap">
          <I w={30} h={28}><path d="M0 0h8v8H0zM0 10h8v8H0zM0 20h8v8H0zM12 6h4v5h-4zM12 17h4v5h-4z" fill={k} /><path d="M17 8.5H20Q27 8.5 27 14T20 19.5H17" stroke={k} strokeWidth="4" /></I>
        </Plain>
        <Plain $ml={16} aria-label="Snap options"><Chevron d="down" tone="#858585" /></Plain>
        <Plain $ml={38} aria-label="Panel menu">
          <I w={22} h={18}><path d="M0 1h4v4H0zM0 7h4v4H0zM0 13h4v4H0zM6 2h16v2H6zM6 8h16v2H6zM6 14h16v2H6z" fill={k} /></I>
        </Plain>
      </ControlBar>

      <Work>
        <Doc>
          <TabStrip>
            <Tab>
              <Plain aria-label="Close document"><I w={16} h={16}><path d="M2 2l12 12M14 2L2 14" stroke="#e8e8e8" strokeWidth="2" /></I></Plain>
              <I w={42} h={24}><path d="M15 24Q8 23 8 17Q8 11 15 10Q17 1 26 1Q33 2 34 9Q42 10 42 17Q42 23 36 24Z" fill={k} /></I>
              Running skeleton new copy.aic* @ 139,49 % (CMYK/Preview)
            </Tab>
          </TabStrip>
          <Stage>
            <Pasteboard />
            <Artboard />
            <ScrollV>
              <Chevron d="up" tone="#a0a0a0" />
              <Flex $n={750} />
              <ThumbV />
              <Flex $n={727} />
              <Chevron d="down" tone="#a0a0a0" />
            </ScrollV>
            <Context>
              <Grip $vertical $w={8} $h={38} />
              <ContextButton $w={168} $ml={16}>
                <I w={32} h={34}>
                  <path d="M16 6H6Q2 6 2 10V27Q2 31 6 31H24Q28 31 28 27V18" stroke={k} strokeWidth="4" />
                  <path d={star(23.5, 9, 9) + star(14, 21, 6)} fill={k} />
                </I>
                Recolor
              </ContextButton>
              <ContextButton $w={162} $ml={8}>Ungroup</ContextButton>
              <Plain $ml={20} aria-label="Duplicate">
                <I w={28} h={28}><path d="M0 0h18v6h-10v14H0z" fill={k} /><rect x="10" y="8" width="18" height="20" fill={k} /><path d="M19 14v10M14 19h10" stroke={c.panel} strokeWidth="2" /></I>
              </Plain>
              <Plain $ml={34} aria-label="Lock">
                <I w={24} h={32}><path d="M5 15V10Q5 3 12 3T19 10V15" stroke={k} strokeWidth="4" /><rect y="14" width="24" height="17" rx="1" fill={k} /><circle cx="12" cy="20" r="3" fill={c.panel} /><path d="M12 20V27" stroke={c.panel} strokeWidth="3" /></I>
              </Plain>
              <Plain $ml={32} aria-label="More options">
                <I w={32} h={8}><circle cx="4" cy="4" r="4" fill={k} /><circle cx="16" cy="4" r="4" fill={k} /><circle cx="28" cy="4" r="4" fill={k} /></I>
              </Plain>
            </Context>
            <ToolsPanel />
            <ColorPicker />
          </Stage>
          <StatusBar>
            <StatusLeft>
              <StatusSelect $w={138} $mr={9}>
                <select aria-label="Zoom level"><option>139,49%</option></select>
                <Chevron d="down" />
              </StatusSelect>
              <StatusSelect $w={138}>
                <select aria-label="Rotation"><option>0°</option></select>
                <Chevron d="down" />
              </StatusSelect>
              <Plain $ml={16} aria-label="First artboard"><I w={16} h={18}><path d="M0 1h2v16H0zM16 1V17L5 9z" fill="#777" /></I></Plain>
              <Plain $ml={20} aria-label="Previous artboard"><I w={12} h={18}><path d="M11 1V17L0 9z" fill="#777" /></I></Plain>
              <Rule $h={0} $w={18} />
              <StatusSelect $w={118}>
                <select aria-label="Artboard"><option>1</option></select>
                <Chevron d="down" />
              </StatusSelect>
              <Plain $ml={18} aria-label="Next artboard"><I w={12} h={18}><path d="M0 1V17L11 9z" fill="#777" /></I></Plain>
              <Plain $ml={20} aria-label="Last artboard"><I w={16} h={18}><path d="M14 1h2v16h-2zM0 1V17L11 9z" fill="#777" /></I></Plain>
              <Rule $h={0} $w={18} />
              <StatusText>Eyedropper</StatusText>
              <Plain $ml={11} aria-label="Status menu"><I w={23} h={18}><path d="M1 1V17L12 9z" fill="#d0d0d0" /></I></Plain>
            </StatusLeft>
            <ScrollH>
              <Chevron d="left" tone="#a0a0a0" />
              <Flex $n={817} />
              <ThumbH />
              <Flex $n={841} />
              <Chevron d="right" tone="#a0a0a0" />
            </ScrollH>
            <Corner />
          </StatusBar>
        </Doc>
        <Dock>
          <DockHead><Plain aria-label="Expand panels"><DoubleLeft /></Plain></DockHead>
          {dock.map(group => (
            <DockGroup key={group[0].name}>
              <Grip $w={38} $h={8} />
              {group.map(item => (
                <DockButton key={item.name} aria-label={item.name}><I w={38} h={40}>{item.art}</I></DockButton>
              ))}
            </DockGroup>
          ))}
        </Dock>
      </Work>
    </Frame>
  );
}
